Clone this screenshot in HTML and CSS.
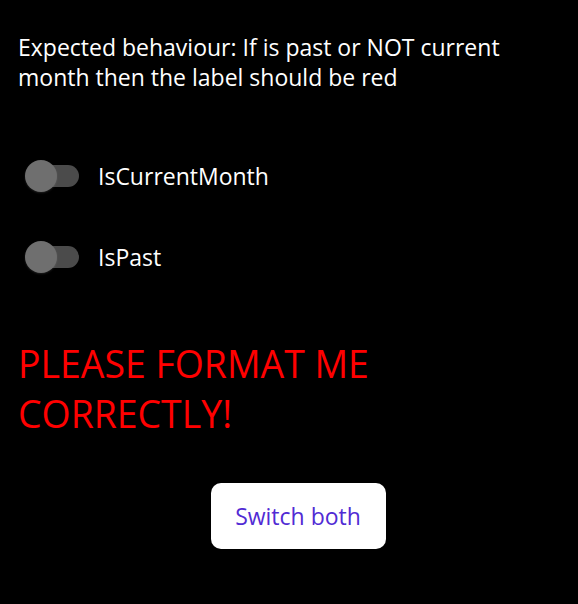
FILE: index.html
```html
<!DOCTYPE html>
<html>
<head>
<meta charset="utf-8">
<link rel="stylesheet" href="styles.css">
</head>
<body>
<div class="page">
  <p class="desc">Expected behaviour: If is past or NOT current month then the label should be red</p>
  <div class="toggles">
    <div class="row">
      <div class="switch"><span class="track"></span><span class="thumb"></span></div>
      <span class="label">IsCurrentMonth</span>
    </div>
    <div class="row">
      <div class="switch"><span class="track"></span><span class="thumb"></span></div>
      <span class="label">IsPast</span>
    </div>
  </div>
  <p class="status">PLEASE FORMAT ME CORRECTLY!</p>
  <div class="actions">
    <button class="btn">Switch both</button>
  </div>
</div>
</body>
</html>
```
FILE: styles.css
```css
html, body {
  margin: 0;
  padding: 0;
  background: #000;
}
body {
  font-family: "Open Sans", "DejaVu Sans", sans-serif;
  color: #fff;
}
.page {
  width: 578px;
  height: 604px;
  box-sizing: border-box;
  padding: 32px 0 0 18px;
}
.desc {
  margin: 0;
  font-size: 23px;
  line-height: 30px;
  width: 530px;
}
.toggles {
  margin-top: 62px;
  display: flex;
  flex-direction: column;
  gap: 37px;
}
.row {
  height: 44px;
  display: flex;
  align-items: center;
}
.switch {
  position: relative;
  width: 54px;
  height: 32px;
  margin-left: 7px;
  margin-right: 19px;
}
.track {
  position: absolute;
  left: 2px;
  top: 5px;
  width: 52px;
  height: 22px;
  border-radius: 11px;
  background: #4b4b4b;
}
.thumb {
  position: absolute;
  left: 0;
  top: 0;
  width: 32px;
  height: 32px;
  border-radius: 50%;
  background: #6f6f6f;
  box-shadow: 0 1px 2px rgba(255,255,255,0.12);
}
.label {
  font-size: 23px;
  line-height: 30px;
}
.status {
  margin: 60px 0 0;
  font-size: 37.4px;
  line-height: 50px;
  color: #ff0000;
  width: 400px;
}
.actions {
  display: flex;
  justify-content: center;
  margin-top: 44px;
}
.btn {
  width: 175px;
  height: 66px;
  border: none;
  border-radius: 10px;
  background: #fff;
  color: #512bd4;
  font-family: "Open Sans", "DejaVu Sans", sans-serif;
  font-size: 23px;
  padding: 0;
}
```
